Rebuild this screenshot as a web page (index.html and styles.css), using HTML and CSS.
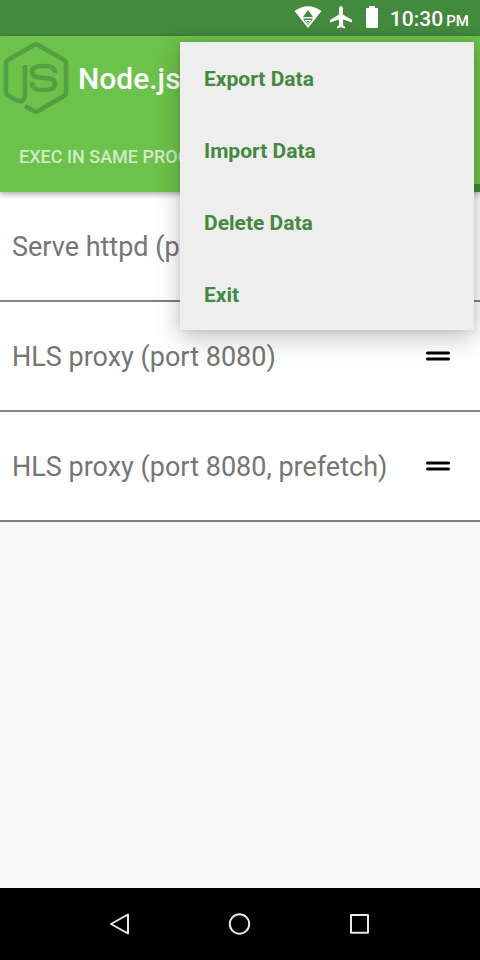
FILE: index.html
```html
<!DOCTYPE html>
<html lang="en">
<head>
<meta charset="utf-8">
<meta name="viewport" content="width=device-width, initial-scale=1">
<title>Node.js</title>
<link rel="stylesheet" href="styles.css">
</head>
<body>
<div class="status">
  <svg width="84" height="36" viewBox="0 0 84 36" aria-hidden="true">
    <path fill="#fff" d="M0.500 11Q14 1.500 27.500 11L14 28Z"/>
    <path fill="#43893e" d="M14 10L19 17H9ZM9 18.500H19L14 25Z"/>
    <path fill="none" stroke="#fff" d="M11.500 20.500H16.500L14 23.500Z"/>
    <path fill="#fff" d="M47 6Q49 6 49 8.500V14.500L58 20V22.500L49 19.500V25L51 26.700V28.500L47 27.300L43 28.500V26.700L45 25V19.500L36 22.500V20L45 14.500V8.500Q45 6 47 6Z"/>
    <path fill="#fff" d="M75 6H81V8H83Q84 8 84 9V27Q84 28 83 28H73Q72 28 72 27V9Q72 8 73 8H75Z"/>
  </svg>
  <span class="clock">10:30 <small>PM</small></span>
</div>
<header class="header">
  <div class="bar">
    <svg class="logo" width="72" height="84" viewBox="0 0 72 84" fill="none" stroke="#539f43" stroke-width="4.500" stroke-linejoin="round" aria-hidden="true">
      <path d="M25 29V58Q25 68 16 64L8 59.500Q6 58.500 6 56.500V27Q6 25 8 24L34 9Q36 7.500 38 9L64 24Q66 25 66 27V57Q66 59 64 60L38 75Q36 76.500 34 75L25 70"/>
      <path d="M55 37C55 31 50 30 44 30C37 30 32 31 32 36C32 41 37 41.500 44 42C51 42.500 55 43 55 48C55 53 50 54 44 54C36 54 32 53 32 46"/>
    </svg>
    <h1>Node.js</h1>
    <nav class="menu" aria-label="Options">
      <button type="button">Export Data</button>
      <button type="button">Import Data</button>
      <button type="button">Delete Data</button>
      <button type="button">Exit</button>
    </nav>
  </div>
  <div class="tabs">
    <button type="button" class="tab">EXEC IN SAME PROCESS</button>
    <span class="indicator"></span>
  </div>
</header>
<main>
  <ul class="list">
    <li><span>Serve httpd (port 8080)</span><button type="button" class="handle" aria-label="Reorder"><svg width="24" height="10" viewBox="0 0 24 10"><path d="M1.500 2H22.500M1.500 8H22.500"/></svg></button></li>
    <li><span>HLS proxy (port 8080)</span><button type="button" class="handle" aria-label="Reorder"><svg width="24" height="10" viewBox="0 0 24 10"><path d="M1.500 2H22.500M1.500 8H22.500"/></svg></button></li>
    <li><span>HLS proxy (port 8080, prefetch)</span><button type="button" class="handle" aria-label="Reorder"><svg width="24" height="10" viewBox="0 0 24 10"><path d="M1.500 2H22.500M1.500 8H22.500"/></svg></button></li>
  </ul>
</main>
<footer class="nav">
  <button type="button" aria-label="Back"><svg width="24" height="24" viewBox="0 0 24 24"><path d="M20 2.500V21.500L3 12Z"/></svg></button>
  <button type="button" aria-label="Home"><svg width="24" height="24" viewBox="0 0 24 24"><circle cx="11.500" cy="12" r="9.700"/></svg></button>
  <button type="button" aria-label="Recent apps"><svg width="24" height="24" viewBox="0 0 24 24"><path d="M3 3H20V20.800H3Z"/></svg></button>
</footer>
</body>
</html>
```
FILE: styles.css
```css
* {
  box-sizing: border-box;
}

body {
  margin: 0;
  min-height: 100vh;
  display: flex;
  flex-direction: column;
  background: #fafafa;
  color: #757575;
  font-family: Roboto, "Liberation Sans", sans-serif;
}

button {
  margin: 0;
  padding: 0;
  border: 0;
  background: none;
  color: inherit;
  font: inherit;
}

svg {
  display: block;
}

.status {
  height: 36px;
  padding-right: 11px;
  display: flex;
  justify-content: flex-end;
  align-items: center;
  gap: 12px;
  background: #43893e;
  color: #fff;
}

.clock {
  padding-top: 2px;
  font-size: 21px;
  font-weight: 500;
  white-space: nowrap;
}

.clock small {
  margin-left: -2px;
  font-size: 15px;
}

.header {
  position: relative;
  z-index: 1;
  background: #6cc24a;
  box-shadow: 0 2px 6px rgba(0, 0, 0, 0.35);
}

.bar {
  position: relative;
  height: 84px;
  display: flex;
  align-items: center;
}

h1 {
  margin: 0 0 0 6px;
  color: #fff;
  font-size: 30px;
  font-weight: 500;
}

.menu {
  position: absolute;
  z-index: 2;
  top: 6px;
  right: 6px;
  width: 294px;
  display: flex;
  flex-direction: column;
  background: #eee;
  box-shadow: 0 8px 24px rgba(0, 0, 0, 0.24), 0 0 6px rgba(0, 0, 0, 0.1);
}

.menu button {
  height: 72px;
  padding: 2px 24px 0;
  color: #43893e;
  font-size: 21px;
  font-weight: 700;
  text-align: left;
}

.tabs {
  height: 72px;
  display: flex;
}

.tab {
  padding: 0 19px;
  color: rgba(255, 255, 255, 0.7);
  font-size: 18px;
  font-weight: 500;
  white-space: nowrap;
}

.indicator {
  flex: 1;
  align-self: flex-end;
  height: 8px;
  background: #43893e;
}

main {
  flex: 1;
}

.list {
  margin: 0;
  padding: 0;
  list-style: none;
}

.list li {
  height: 110px;
  padding: 0 30px 0 12px;
  display: flex;
  align-items: center;
  justify-content: space-between;
  border-bottom: 2px solid #808080;
  background: #fff;
  font-size: 27px;
}

.list span {
  padding-top: 2px;
}

.handle svg {
  stroke: #000;
  stroke-width: 3;
  stroke-linecap: round;
}

.nav {
  height: 72px;
  display: flex;
  justify-content: center;
  align-items: center;
  gap: 96px;
  background: #000;
}

.nav svg {
  fill: none;
  stroke: #e8e8e8;
  stroke-width: 2;
  stroke-linejoin: round;
}
```
